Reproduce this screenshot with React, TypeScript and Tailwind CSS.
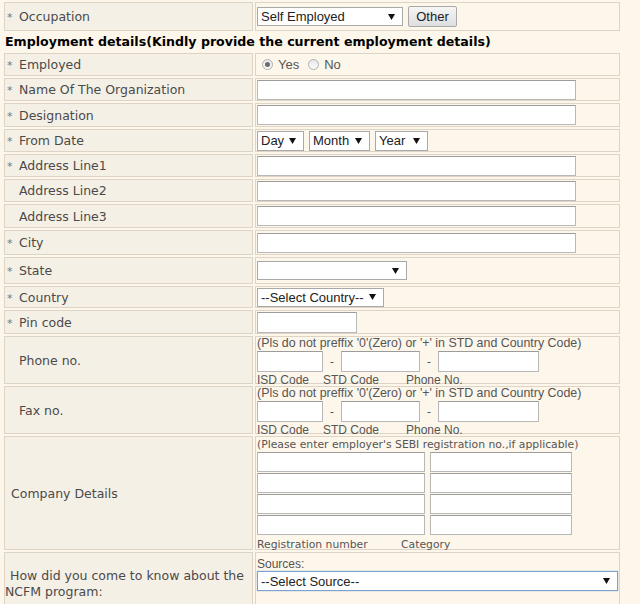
import React from 'react';

const LABEL_FONT = "font-['DejaVu_Sans',Verdana,sans-serif]";
const FIELD_FONT = "font-['Liberation_Sans',Arial,sans-serif]";

const Arrow: React.FC = () => (
  <svg width="7" height="6" viewBox="0 0 7 6" className="shrink-0">
    <path d="M0 0 L7 0 L3.5 6 Z" fill="#111" />
  </svg>
);

const Select: React.FC<{ text?: string; w: string; h?: string; focused?: boolean }> = ({ text = '', w, h = 'h-[19px]', focused }) => (
  <div
    className={`${w} ${h} ${FIELD_FONT} flex items-center justify-between bg-white border ${
      focused ? 'border-[#7da2ce] shadow-[0_0_1px_#7da2ce]' : 'border-[#a9a9a9]'
    } pl-[3px] pr-[7px] text-[13px] text-[#222]`}
  >
    <span className="whitespace-nowrap leading-none">{text}</span>
    <Arrow />
  </div>
);

const TextBox: React.FC<{ w: string; h?: string }> = ({ w, h = 'h-[21px]' }) => (
  <div className={`${w} ${h} bg-white border border-[#b8b8b8] border-t-[#9c9c9c]`} />
);

const Radio: React.FC<{ checked?: boolean }> = ({ checked }) => (
  <span className="w-[11px] h-[11px] rounded-full border border-[#b0b0b0] bg-gradient-to-b from-[#e9e9e9] to-[#fafafa] flex items-center justify-center">
    {checked && <span className="w-[5px] h-[5px] rounded-full bg-[#6b6b6b]" />}
  </span>
);

const Label: React.FC<{ req?: boolean; children: React.ReactNode; h: string }> = ({ req, children, h }) => (
  <div className={`${h} ${LABEL_FONT} flex items-center bg-[#f5f0e6] border border-[#ddd4c5] pt-[2px] text-[12.5px] text-[#4a4a4a]`}>
    <span className="inline-block w-[14px] pl-[2px] text-[#777] text-[11px] leading-none">{req ? '*' : ''}</span>
    <span className="whitespace-nowrap">{children}</span>
  </div>
);

const Value: React.FC<{ h: string; children?: React.ReactNode; top?: boolean }> = ({ h, children, top }) => (
  <div className={`${h} flex ${top ? 'flex-col' : 'items-center'} bg-[#fdf6eb] border border-[#ddd4c5] pl-px`}>
    {children}
  </div>
);

const Hint: React.FC<{ children: React.ReactNode }> = ({ children }) => (
  <div className={`${FIELD_FONT} text-[12.4px] leading-[13px] text-[#555] whitespace-nowrap`}>{children}</div>
);

const PhoneBlock: React.FC = () => (
  <div className="flex flex-col">
    <Hint>(Pls do not preffix '0'(Zero) or '+' in STD and Country Code)</Hint>
    <div className="flex items-center mt-px">
      <TextBox w="w-[66px]" />
      <span className="w-[18px] text-center text-[#555] text-[12px]">-</span>
      <TextBox w="w-[79px]" />
      <span className="w-[18px] text-center text-[#555] text-[12px]">-</span>
      <TextBox w="w-[101px]" />
    </div>
    <div className={`${FIELD_FONT} flex text-[12px] leading-[15px] pt-px text-[#555]`}>
      <span className="w-[66px]">ISD Code</span>
      <span className="w-[83px]">STD Code</span>
      <span>Phone No.</span>
    </div>
  </div>
);

export default function App() {
  return (
    <div className="min-h-[604px] w-[640px] bg-[#fdf6ea] overflow-hidden">
      <div className="grid grid-cols-[249px_365px] gap-[2px] pt-[2px] pl-[4px]">
        <Label req h="h-[29px]">Occupation</Label>
        <Value h="h-[29px]">
          <div className="flex items-center gap-[5px]">
            <Select text="Self Employed" w="w-[146px]" />
            <button className={`${FIELD_FONT} h-[21px] w-[49px] text-[13px] text-[#222] border border-[#a9a9a9] rounded-[2px] bg-gradient-to-b from-[#f6f6f6] to-[#dedede]`}>
              Other
            </button>
          </div>
        </Value>

        <div className={`col-span-2 h-[18px] ${LABEL_FONT} font-bold text-[12.6px] text-black flex items-center pt-px ml-px`}>
          Employment details(Kindly provide the current employment details)
        </div>

        <Label req h="h-[23px]">Employed</Label>
        <Value h="h-[23px]">
          <div className={`${FIELD_FONT} flex items-center text-[13px] text-[#555] pl-[5px]`}>
            <Radio checked />
            <span className="ml-[5px] mr-[9px]">Yes</span>
            <Radio />
            <span className="ml-[5px]">No</span>
          </div>
        </Value>

        <Label req h="h-[23px]">Name Of The Organization</Label>
        <Value h="h-[23px]"><TextBox w="w-[319px]" h="h-[20px]" /></Value>

        <Label req h="h-[24px]">Designation</Label>
        <Value h="h-[24px]"><TextBox w="w-[319px]" h="h-[20px]" /></Value>

        <Label req h="h-[23px]">From Date</Label>
        <Value h="h-[23px]">
          <div className="flex items-center gap-[5px]">
            <Select text="Day" w="w-[47px]" h="h-[20px]" />
            <Select text="Month" w="w-[61px]" h="h-[20px]" />
            <Select text="Year" w="w-[53px]" h="h-[20px]" />
          </div>
        </Value>

        <Label req h="h-[23px]">Address Line1</Label>
        <Value h="h-[23px]"><TextBox w="w-[319px]" h="h-[20px]" /></Value>

        <Label h="h-[23px]">Address Line2</Label>
        <Value h="h-[23px]"><TextBox w="w-[319px]" h="h-[20px]" /></Value>

        <Label h="h-[24px]">Address Line3</Label>
        <Value h="h-[24px]"><TextBox w="w-[319px]" h="h-[20px]" /></Value>

        <Label req h="h-[25px]">City</Label>
        <Value h="h-[25px]"><TextBox w="w-[319px]" h="h-[20px]" /></Value>

        <Label req h="h-[27px]">State</Label>
        <Value h="h-[27px]"><Select w="w-[150px]" h="h-[19px]" /></Value>

        <Label req h="h-[22px]">Country</Label>
        <Value h="h-[22px]"><Select text="--Select Country--" w="w-[127px]" h="h-[19px]" /></Value>

        <Label req h="h-[24px]">Pin code</Label>
        <Value h="h-[24px]"><TextBox w="w-[100px]" h="h-[21px]" /></Value>

        <Label h="h-[48px]">Phone no.</Label>
        <Value h="h-[48px]" top><PhoneBlock /></Value>

        <Label h="h-[48px]">Fax no.</Label>
        <Value h="h-[48px]" top><PhoneBlock /></Value>

        <div className={`h-[114px] ${LABEL_FONT} flex items-center bg-[#f5f0e6] border border-[#ddd4c5] pl-[6px] pt-[2px] text-[12.5px] text-[#4a4a4a]`}>
          Company Details
        </div>
        <Value h="h-[114px]" top>
          <div className={`${LABEL_FONT} text-[10.8px] leading-[15px] text-[#555] whitespace-nowrap`}>
            (Please enter employer's SEBI registration no.,if applicable)
          </div>
          <div className="flex gap-[5px]">
            <div className="flex flex-col gap-px">
              {[0, 1, 2, 3].map((i) => (
                <TextBox key={i} w="w-[168px]" h="h-[20px]" />
              ))}
            </div>
            <div className="flex flex-col gap-px">
              {[0, 1, 2, 3].map((i) => (
                <TextBox key={i} w="w-[142px]" h="h-[20px]" />
              ))}
            </div>
          </div>
          <div className={`${LABEL_FONT} flex text-[10.8px] leading-[16px] pt-[2px] text-[#555]`}>
            <span className="w-[144px]">Registration number</span>
            <span>Category</span>
          </div>
        </Value>

        <div className={`h-[62px] ${LABEL_FONT} flex items-center bg-[#f5f0e6] border border-[#ddd4c5] pt-[2px] text-[12.5px] leading-[16px] text-[#4a4a4a]`}>
          <div>
            <div className="pl-[5px] whitespace-nowrap">How did you come to know about the</div>
            <div className="whitespace-nowrap">NCFM program:</div>
          </div>
        </div>
        <Value h="h-[62px]" top>
          <div className={`${FIELD_FONT} text-[12px] leading-[14px] text-[#555] mt-[4px]`}>Sources:</div>
          <Select text="--Select Source--" w="w-[361px]" h="h-[20px]" focused />
        </Value>
      </div>
    </div>
  );
}
